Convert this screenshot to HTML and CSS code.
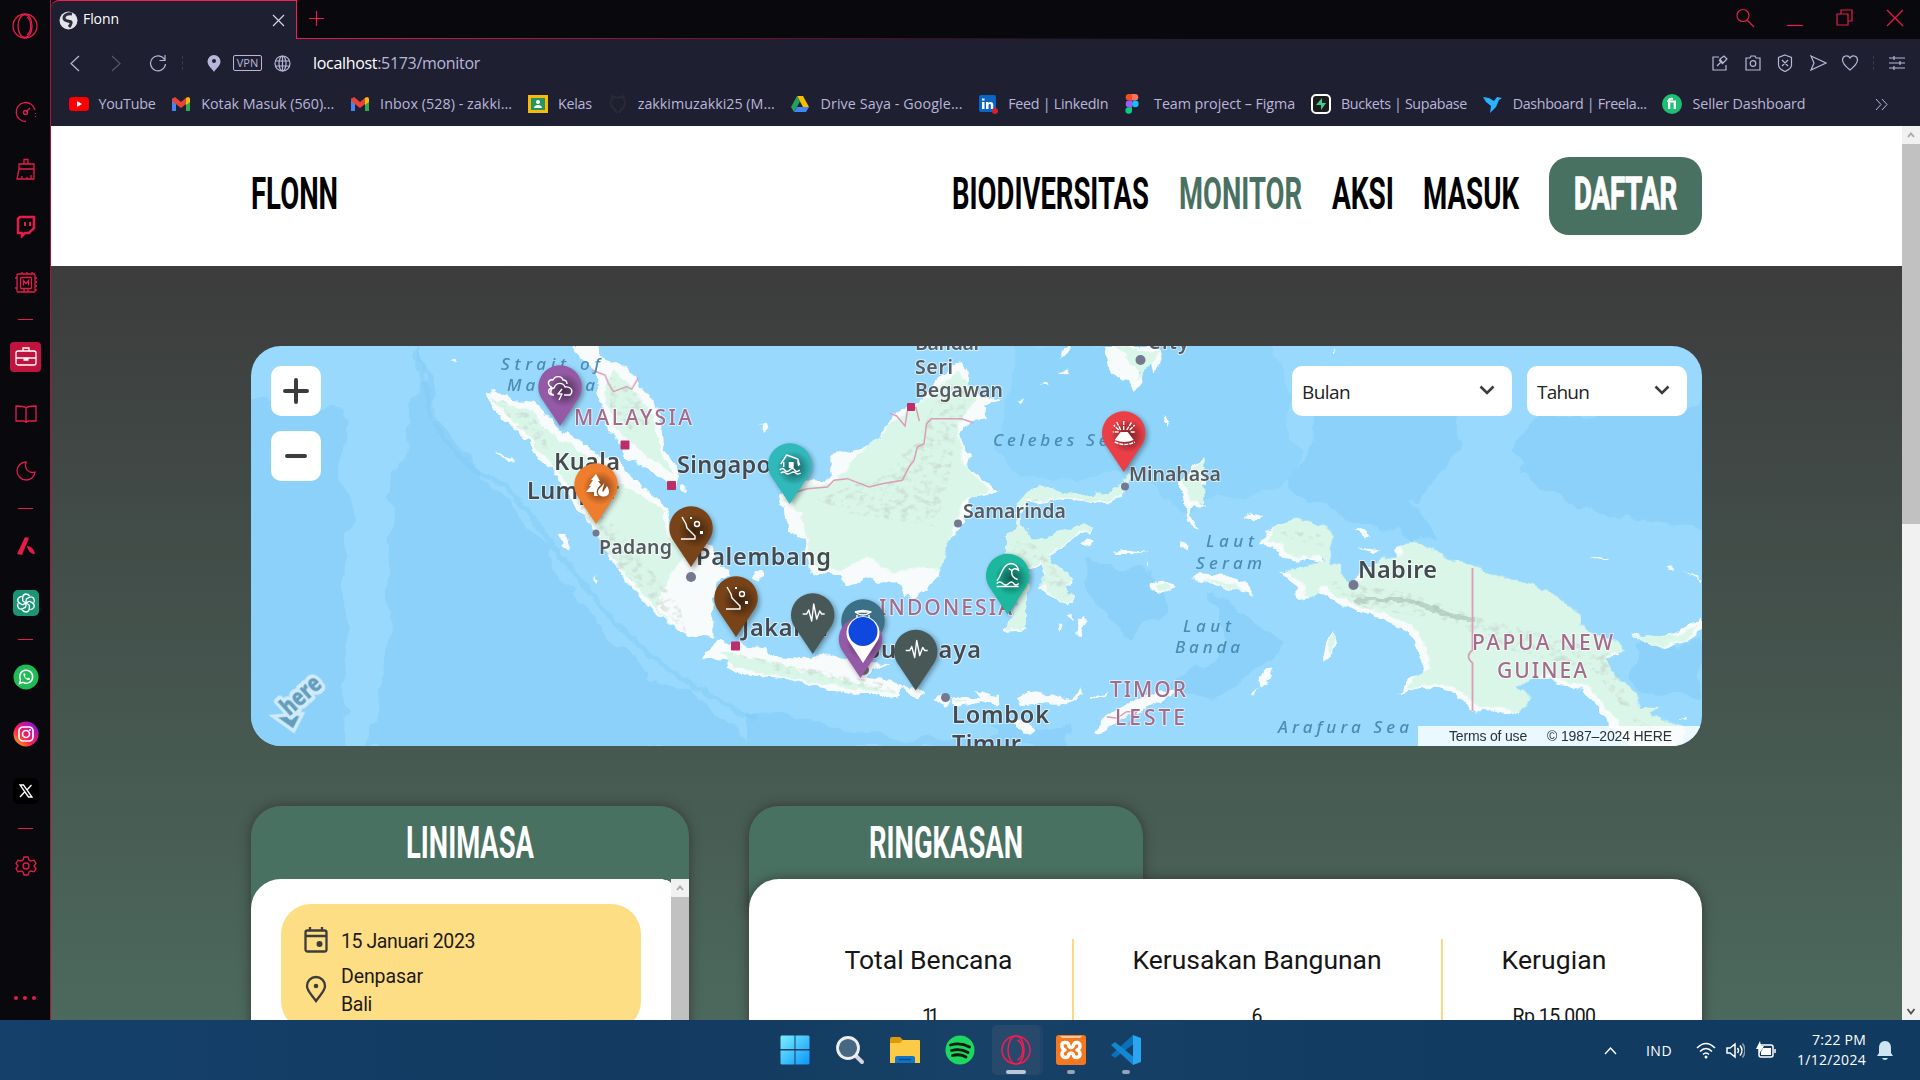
FILE: index.html
```html
<!DOCTYPE html>
<html lang="id">
<head>
<meta charset="utf-8">
<title>Flonn</title>
<link rel="stylesheet" href="styles.css">
</head>
<body>
<div class="browser">
  <aside class="sidebar">
    <div class="side-logo"><svg width="28" height="28" viewBox="0 0 28 28"><circle cx="14" cy="14" r="12"/><ellipse cx="14" cy="14" rx="7" ry="11.5"/><path d="M16 5c5 4 5 14 0 18"/></svg></div>
    <div class="side-item first"><svg viewBox="0 0 24 24"><path d="M12 21.500A9.500 9.500 0 1 1 21 10M12 12l4-4M21.500 13v1M21.500 16v1"/><circle cx="11.500" cy="12.500" r="2"/></svg></div>
    <div class="side-item"><svg viewBox="0 0 24 24"><path d="M10 7V2.500h4V7M5 7h15v5H5zM5 12L3 22h17v-10M8 22v-3M13 22v-2M17 22v-4"/></svg></div>
    <div class="side-item"><svg viewBox="0 0 24 24"><path stroke-width="2.500" d="M4 4.500L6 3h14v11l-5 5h-4l-3 3v-3H4z"/><path stroke-width="2" d="M11 8v4M16 8v4"/></svg></div>
    <div class="side-item"><svg viewBox="0 0 24 24"><rect x="3" y="3" width="18" height="18" rx="1"/><rect x="6.500" y="6.500" width="11" height="11" rx="1"/><path d="M9.500 14.500v-5l2.500 3 2.500-3v5M8 3V1M13 3V1M18 3V1M21 7h2M21 11h2M21 15h2M21 19h2M3 7H1M3 17H1M10 17v4M14 17v4"/></svg></div>
    <div class="side-rule"></div>
    <div class="side-item"><div class="side-active"><svg viewBox="0 0 24 24"><rect x="2" y="6" width="20" height="14" rx="2"/><path d="M9 6V3h6v3M2 13h20"/><path d="M9.500 14.500h5" stroke-width="2.500"/></svg></div></div>
    <div class="side-item"><svg viewBox="0 0 24 24"><path d="M12 6C11 4.500 9 4 2 4v15h7c2 0 3 1 3 2 0-1 1-2 3-2h7V4c-7 0-9 .5-10 2zM12 6v15"/></svg></div>
    <div class="side-item"><svg viewBox="0 0 24 24"><path d="M12 3a9 9 0 1 0 9 10c-6 2-11-3-9-10z"/></svg></div>
    <div class="side-rule"></div>
    <div class="side-item"><svg viewBox="0 0 24 24"><path class="solid" d="M3 20L11 3l4 1-7 17zM13 12c4 0 7 3 8 8-4 0-7-3-8-8z"/></svg></div>
    <div class="side-item"><svg class="app" viewBox="0 0 26 26"><rect width="26" height="26" rx="5" fill="#1b9573"/><g fill="none" stroke="#fff" stroke-width="1.300" stroke-linejoin="round"><path id="knot" d="M9.700 11V7.500q0-3 3-3.500 2.500 0 4 2M9.700 11l3.500 2"/><use href="#knot" transform="rotate(60 13 13)"/><use href="#knot" transform="rotate(120 13 13)"/><use href="#knot" transform="rotate(180 13 13)"/><use href="#knot" transform="rotate(240 13 13)"/><use href="#knot" transform="rotate(300 13 13)"/></g></svg></div>
    <div class="side-rule"></div>
    <div class="side-item"><svg class="app" viewBox="0 0 26 26"><circle cx="13" cy="13" r="12.500" fill="#1fbb54"/><path d="M6.500 19.500l1-3.600a6.500 6.500 0 1 1 2.500 2.500z" fill="none" stroke="#fff" stroke-width="1.500"/><path d="M10.500 9.500c-.5 3.500 3 7 6 6.500l.5-1.500-2-1-1 1c-1-.5-2-1.500-2.300-2.500l1-1-.8-1.700z" fill="#fff"/></svg></div>
    <div class="side-item"><svg class="app" viewBox="0 0 26 26"><defs><linearGradient id="insta" x1="0" y1="1" x2="1" y2="0"><stop offset="0" stop-color="#ffc400"/><stop offset=".4" stop-color="#fd1d50"/><stop offset="1" stop-color="#7a10f5"/></linearGradient></defs><circle cx="13" cy="13" r="12.500" fill="url(#insta)"/><rect x="6" y="6" width="14" height="14" rx="4" fill="none" stroke="#fff" stroke-width="1.700"/><circle cx="13" cy="13" r="3.500" fill="none" stroke="#fff" stroke-width="1.700"/><circle cx="17" cy="9" r="1" fill="#fff"/></svg></div>
    <div class="side-item"><svg class="app" viewBox="0 0 26 26"><rect width="26" height="26" rx="6" fill="#000"/><path d="M7 7h3.500l8.500 12h-3.500zM7 19l5-5.500M18.500 7l-5 5.500" fill="none" stroke="#fff" stroke-width="1.300"/></svg></div>
    <div class="side-rule"></div>
    <div class="side-item"><svg viewBox="0 0 24 24"><path d="M10 3h4l1 3 2 1 3-.8 2 3.300L20 12l2 2.500-2 3.300-3-.8-2 1-1 3h-4l-1-3-2-1-3 .8-2-3.300L4 12 2 9.500l2-3.300L7 7l2-1z"/><circle cx="12" cy="12" r="3"/></svg></div>
    <div class="side-more"><i></i><i></i><i></i></div>
  </aside>

  <main class="window">
    <header class="chrome">
      <div class="tabs">
        <div class="tab">
          <svg width="19" height="19" viewBox="0 0 19 19"><circle cx="9.500" cy="9.500" r="9" fill="#e4e4ea"/><path d="M13 3C9 2 5 4 5 7s4 3 6 3.500 1 3-1 5.500" fill="none" stroke="#2b2c3e" stroke-width="3"/></svg>
          <span class="fit" data-w="36">Flonn</span>
          <svg class="tab-close" width="13" height="13" viewBox="0 0 13 13"><path d="M1 1l11 11M12 1L1 12"/></svg>
        </div>
        <svg class="tab-new" width="15" height="15" viewBox="0 0 15 15"><path d="M7.500 0v15M0 7.500h15"/></svg>
        <div class="win-controls">
          <svg viewBox="0 0 20 20"><circle cx="8" cy="7.500" r="6"/><path d="M12 12l7 7"/></svg>
          <svg viewBox="0 0 20 20"><path d="M2 17.500h16"/></svg>
          <svg viewBox="0 0 20 20"><path d="M2 6h11v11H2zM6 6V2h11v11h-4"/></svg>
          <svg viewBox="0 0 20 20"><path d="M2 2l16 16M18 2L2 18"/></svg>
        </div>
      </div>
      <div class="toolbar">
        <svg class="tb-back" width="10" height="17" viewBox="0 0 10 17"><path d="M9 1L1 8.500 9 16"/></svg>
        <svg class="tb-fwd" width="10" height="17" viewBox="0 0 10 17"><path d="M1 1l8 7.500L1 16"/></svg>
        <svg class="tb-reload" width="18" height="18" viewBox="0 0 18 18"><path d="M15.500 5.500A7.500 7.500 0 1 0 16.500 10M16 1v5.500h-5.500"/></svg>
        <i class="tb-sep"></i>
        <svg class="tb-pin" width="14" height="17" viewBox="0 0 14 17"><path d="M7 0a6.500 6.500 0 0 1 6.500 6.500C13.500 11 8.500 14 7 17 5.500 14 .5 11 .5 6.500A6.500 6.500 0 0 1 7 0z"/><circle cx="7" cy="6" r="2"/></svg>
        <span class="vpn">VPN</span>
        <svg class="tb-globe" width="17" height="17" viewBox="0 0 17 17"><circle cx="8.500" cy="8.500" r="7.500"/><ellipse cx="8.500" cy="8.500" rx="3.500" ry="7.500"/><path d="M1 6h15M1 11h15M8.500 1v15"/></svg>
        <div class="url fit" data-w="167"><b>localhost</b>:5173/monitor</div>
        <div class="tb-right">
          <svg viewBox="0 0 18 18"><path d="M8 3H2v13h13v-5M6 12l4-4M8 6l4 4M9 5l4-3 3 3-4 4z"/></svg>
          <svg viewBox="0 0 18 18"><path d="M2 4h4l1-2h4l1 2h4v12H2z"/><circle cx="9" cy="9.500" r="2.800"/></svg>
          <svg viewBox="0 0 18 18"><path d="M9 1l6.500 2.500V11c0 3-3 5-6.500 6.500C5.500 16 2.500 14 2.500 11V3.500zM6 6l6 6M12 6l-6 6"/></svg>
          <svg viewBox="0 0 18 18"><path d="M2 2l15 7-15 7 3-7z"/></svg>
          <svg viewBox="0 0 18 18"><path d="M9 16C4 12 1.500 9.500 1.500 6 1.500 1.500 7 .5 9 4c2-3.500 7.500-2.500 7.500 2 0 3.500-2.500 6-7.500 10z"/></svg>
          <i class="tb-sep"></i>
          <svg viewBox="0 0 18 18"><path d="M1 4h16M1 9h16M1 14h16M6 2v4M12 7v4M6 12v4"/></svg>
        </div>
      </div>
      <div class="bookmarks">
        <div class="bm"><svg viewBox="0 0 20 20"><rect y="3" width="20" height="14" rx="3.500" fill="#f00"/><path d="M8 7l5 3-5 3z" fill="#fff"/></svg><span class="fit" data-w="57">YouTube</span></div>
        <div class="bm"><svg viewBox="0 0 20 20"><path d="M1 4v13h4V9z" fill="#4285f4"/><path d="M19 4v13h-4V9z" fill="#34a853"/><path d="M1 5l3-2 6 5 6-5 3 2v2l-9 7-9-7z" fill="#ea4335"/><path d="M15 4l3-1 1 2v3l-4 3z" fill="#fbbc04"/></svg><span class="fit" data-w="133">Kotak Masuk (560)...</span></div>
        <div class="bm"><svg viewBox="0 0 20 20"><path d="M1 4v13h4V9z" fill="#4285f4"/><path d="M19 4v13h-4V9z" fill="#34a853"/><path d="M1 5l3-2 6 5 6-5 3 2v2l-9 7-9-7z" fill="#ea4335"/><path d="M15 4l3-1 1 2v3l-4 3z" fill="#fbbc04"/></svg><span class="fit" data-w="132">Inbox (528) - zakki...</span></div>
        <div class="bm"><svg viewBox="0 0 20 20"><path d="M0 1h20v18H0z" fill="#f9b90c"/><path d="M3 4h14v12H3z" fill="#24985a"/><circle cx="10" cy="8" r="2" fill="#fff"/><path d="M6 14c0-4 8-4 8 0z" fill="#fff"/></svg><span class="fit" data-w="34">Kelas</span></div>
        <div class="bm"><svg viewBox="0 0 20 20"><path d="M8 19c1-2-1-3-3-5-3-3-3-7-1-9l.5-3L8 3.500h4L15.500 2l.5 3c2 3 1 7-1 9s-4 3-3 5" fill="none" stroke="#282a36" stroke-width="2.200"/></svg><span class="fit" data-w="137">zakkimuzakki25 (M...</span></div>
        <div class="bm"><svg viewBox="0 0 20 20"><path d="M7 2h6l6 11h-6z" fill="#fbbc04"/><path d="M7 2l3 5.500L4 18l-3-5z" fill="#20a25b"/><path d="M4 18l3-5h12l-3 5z" fill="#4285f4"/></svg><span class="fit" data-w="142">Drive Saya - Google...</span></div>
        <div class="bm"><svg viewBox="0 0 20 20"><rect x="1" y="1" width="17" height="17" rx="2" fill="#0a66c2"/><path d="M4 8h2.500v7H4zM4 4.500h2.500v2H4zM8 8h2.300v1c2-2 5-1 5 2v4h-2.500v-4c0-1.500-2.300-1.500-2.300 0v4H8z" fill="#fff"/><circle cx="17" cy="17" r="3" fill="#d3222a"/></svg><span class="fit" data-w="100">Feed | LinkedIn</span></div>
        <div class="bm"><svg viewBox="0 0 20 20"><path d="M8 0H5a3.300 3.300 0 0 0 0 6.600h3z" fill="#f24e1e"/><path d="M8 0h3a3.300 3.300 0 0 1 0 6.600H8z" fill="#ff7262"/><path d="M8 6.600H5a3.300 3.300 0 0 0 0 6.600h3z" fill="#a259ff"/><circle cx="11.300" cy="9.900" r="3.300" fill="#1abcfe"/><path d="M8 13.200H5a3.300 3.300 0 1 0 3 3.300z" fill="#0acf83"/></svg><span class="fit" data-w="141">Team project – Figma</span></div>
        <div class="bm"><svg viewBox="0 0 20 20"><rect x="1" y="1" width="18" height="18" rx="4" fill="#1c1c1c" stroke="#fff" stroke-width="2"/><path d="M11 4l-6 7h5v5l5-7h-4z" fill="#3ecf8e"/></svg><span class="fit" data-w="126">Buckets | Supabase</span></div>
        <div class="bm"><svg viewBox="0 0 20 20"><path d="M0 3l6 1 5 3 3-4 5 1-3 2-3 7-6 6 1-7-5-4z" fill="#29b2fe"/></svg><span class="fit" data-w="134">Dashboard | Freela...</span></div>
        <div class="bm"><svg viewBox="0 0 20 20"><circle cx="10" cy="10" r="10" fill="#1dbf73"/><path d="M6 15V8H5V6.500h1C6 4 8 3.500 11 4v2C9 5.500 8.300 6 8.300 6.500H14V15h-2.400V8.500H8.300V15z" fill="#fff"/></svg><span class="fit" data-w="113">Seller Dashboard</span></div>
        <svg class="bm-more" width="13" height="11" viewBox="0 0 13 11"><path d="M1 0l5 5.500L1 11M7 0l5 5.500L7 11"/></svg>
      </div>
    </header>

    <div class="viewport">
      <div class="page">
        <nav class="nav">
          <svg class="display logo" width="87" height="64"><text x="0" y="45" textLength="87" lengthAdjust="spacingAndGlyphs">FLONN</text></svg>
          <svg class="display" width="196" height="64"><text x="-1" y="45" textLength="197" lengthAdjust="spacingAndGlyphs">BIODIVERSITAS</text></svg>
          <svg class="display current" width="121" height="64"><text x="-1" y="45" textLength="123" lengthAdjust="spacingAndGlyphs">MONITOR</text></svg>
          <svg class="display" width="61" height="64"><text x="0" y="45" textLength="62" lengthAdjust="spacingAndGlyphs">AKSI</text></svg>
          <svg class="display" width="94" height="64"><text x="-1" y="45" textLength="96" lengthAdjust="spacingAndGlyphs">MASUK</text></svg>
          <div class="cta"><svg class="display" width="101" height="64"><text x="-1" y="45" textLength="103" lengthAdjust="spacingAndGlyphs">DAFTAR</text></svg></div>
        </nav>

        <section class="map">
          <svg class="map-canvas" width="1451" height="400" viewBox="251 346 1451 400">
            <defs>
              <filter id="coast" x="-5%" y="-5%" width="110%" height="110%"><feTurbulence type="fractalNoise" baseFrequency=".09" numOctaves="3" seed="4" result="n"/><feDisplacementMap in="SourceGraphic" in2="n" scale="9" xChannelSelector="R" yChannelSelector="G"/></filter>
              <filter id="depth" x="-5%" y="-5%" width="110%" height="110%"><feTurbulence type="fractalNoise" baseFrequency=".03" numOctaves="3" seed="8" result="n"/><feDisplacementMap in="SourceGraphic" in2="n" scale="28" xChannelSelector="R" yChannelSelector="G"/></filter>
              <filter id="relief" x="0" y="0" width="100%" height="100%"><feTurbulence type="fractalNoise" baseFrequency=".12 .16" numOctaves="3" seed="11"/><feColorMatrix values="0 0 0 0 .5  0 0 0 0 .6  0 0 0 0 .55  3.500 0 0 0 -1.700"/><feComposite in2="SourceAlpha" operator="in"/></filter>
              <filter id="soft"><feGaussianBlur stdDeviation="2.500"/></filter>
              <radialGradient id="pinshade" cx=".5" cy=".5" r=".5"><stop offset="0" stop-opacity=".5"/><stop offset=".5" stop-opacity=".28"/><stop offset="1" stop-opacity="0"/></radialGradient>
              <path id="pin" d="M0 0L-19-28.500A21.700 21.700 0 1 1 19-28.500z"/>
              <path id="sumatra" d="M705 155L735 150 790 180 850 185 875 210 900 240 925 262 1000 310 1040 345 1110 360 1130 400 1150 420 1175 440 1210 465 1235 485 1260 505 1255 530 1270 590 1330 610 1390 620 1410 680 1445 690 1440 710 1400 720 1390 790 1390 895 1350 890 1315 895 1280 865 1215 820 1160 760 1110 700 1070 650 1040 580 1000 530 960 490 935 430 905 385 870 365 850 320 790 265 730 210z"/>
              <path id="malaya" d="M965 18L985 45 1030 85 1042 130 1050 200 1075 270 1110 310 1125 350 1180 380 1240 420 1275 440 1290 410 1275 370 1240 330 1235 260 1215 190 1165 130 1130 80 1090 70 1050 50 1045 18z"/>
              <path id="borneo" d="M160 425L190 420 230 425 245 400 240 345 300 330 360 315 420 250 430 220 470 205 510 185 540 140 590 95 625 65 660 100 650 140 680 140 700 170 760 180 700 200 715 235 660 240 630 280 640 330 660 350 650 380 690 410 740 455 700 465 660 470 655 530 625 570 590 610 580 660 565 705 530 745 490 775 465 770 455 740 430 720 385 735 345 710 320 735 285 740 270 705 220 700 185 705 170 640 160 590 125 585 108 540 105 510 90 490 95 460z"/>
              <path id="sulawesi" d="M800 560L800 500 825 465 870 440 920 455 1000 470 1070 465 1115 440 1130 400 1140 410 1125 450 1090 490 1010 490 960 475 880 485 830 490 812 520 812 560 850 600 885 610 920 580 985 560 1030 565 1025 580 985 585 930 630 895 650 915 680 945 695 965 730 945 745 970 780 955 800 910 770 870 740 885 700 870 675 835 690 830 780 830 870 770 875 775 840 800 800 800 700 765 640 765 600z"/>
              <path id="papua" d="M150 610L170 575 235 543 285 555 340 575 350 605 335 640 345 680 370 690 375 715 405 745 430 735 450 700 500 665 560 655 545 630 590 615 640 640 700 665 760 680 850 720 950 745 1040 790 1095 835 1095 870 1160 900 1210 920 1228 945 1170 955 1170 975 1200 1020 1240 1050 1270 1110 1325 1110 1300 1130 1340 1150 1400 1175 1400 1220 1260 1220 1180 1130 1120 1050 1060 1035 980 1010 950 1020 900 1050 945 1080 930 1110 890 1125 850 1110 790 1115 740 1065 690 1045 640 1040 570 1060 600 1010 640 1000 640 970 620 920 590 870 500 830 420 805 350 770 315 745 295 775 265 780 260 740 205 700 260 690 330 670 310 655 250 665 210 650 200 625z"/>
              <path id="java" d="M-145 955L-100 905-40 910 0 920 40 925 70 950 180 960 220 935 270 955 330 965 425 970 360 990 350 1010 430 1020 455 1045 445 1080 400 1065 330 1065 250 1050 150 1030 100 1015 0 1005-70 990-60 965z"/>
            </defs>
            <rect x="251" y="346" width="1451" height="400" fill="#98d9fd"/>
            <g class="sea" filter="url(#depth)">
              <path d="M240 395L350 410 340 480 350 520 345 600 350 650 345 750H240zM415 340L420 380 400 460 385 520 390 640 365 750H760L700 700 620 650 560 580 520 510 470 460 440 420z"/>
              <path d="M1020 345L1270 340 1290 420 1300 480 1180 510 1130 470 1080 478 1010 475 1000 440z" opacity=".75"/>
              <path d="M1320 410L1460 400 1450 470 1410 500 1440 540 1350 520 1290 490zM1530 420L1710 400V530L1600 515 1540 490 1510 450z"/>
              <path d="M1090 560L1150 570 1170 610 1130 640 1080 590zM1210 590L1280 640 1240 690 1160 700 1220 650z"/>
              <path d="M750 710L900 740 1000 735 990 720 1070 728 1060 750H750zM1630 650L1700 640V700L1640 690z"/>
            </g>
            <path d="M415 350c20 60 10 80 60 120 50 20 60 60 90 90 60 80 90 110 190 160" fill="none" stroke="#82cbf6" stroke-width="5" opacity=".5" filter="url(#coast)"/>
            <g class="land" filter="url(#coast)">
              <g transform="translate(250 340) scale(.33333)"><use href="#sumatra"/><use href="#malaya"/><path d="M740 335l40 15 10 15-30-10zM930 580l20 5 15 40-10 10-20-20zM1030 700l15 20-8 5zM600 55l20 0 0 15zM1150 420l20 0 10 30-15 5zM1290 440l25 10-5 10-20-10z"/></g>
              <g transform="translate(750 340) scale(.33333)">
                <use href="#borneo"/><use href="#sulawesi"/><use href="#java"/>
                <path d="M450 1045l50 0 25 15-25 15zM550 1080l30-20 20 25-20 15zM600 1075l40-10 50 10-10-25 20 5 20 20 25-10v25l-45-2-50 12-40-5zM800 1075l40-20 60 10 60 15 35-35v25l-55 22-60-2-60 5zM780 1135l50 10 30 25-20 15-40-25zM1035 1185l25-55 60-35 60-25 60-15 50-5-60 35-50 25-70 30-50 40zM1020 1068l50-15-10 12-40 10z"/>
                <path d="M1065 18l10 77 55 30 20 30 25-35-10-30 35-30 10 40 25-50-5-32zM930 60l10-42 25 0-20 30zM925 95l20-10 10 10-20 5zM870 130l20-5 5 8zM800 185l25-10-20 18zM1240 230l15 10-8 18z"/>
                <path d="M1290 430l40-50 35-30-15 40 20 40-40 20v30l45 20-45-5-10 25 30 50-35-25-10-55zM1320 715l30-15 80 5 60 30 20 30-50-15-80-15zM1200 725l40-10 35 25-40 20-30-15zM1090 635l20-8 40 8 55 3-50 5 0 0-60-2zM1190 650l8 25-5 0zM990 610l20-15 25 10-20 12zM985 840l15-15 10 20-20 40-10-5zM925 850l15 5-5 20-10-5zM950 820l15-5v25zM30 255l20-5 5 20-15 8zM10 690l30 0 5 15-25 20-15-15zM1290 610l30 8-10 10-20-5z"/>
              </g>
              <g transform="translate(1210 340) scale(.33333)"><use href="#papua"/><path d="M1260 880l40 5 50 5 50-10 40-30 36-10v30l-46 30-70 25-50-20zM340 940l5-40 25-30 13 40-33 55zM145 1030l20-40 20-5-15 40-20 15zM125 1060l20-15-12 20zM95 530l30-12 35 10-30 15zM430 562l25 0 30 30-20-2zM440 625l75 10-30 5zM1145 655l50-2-20 8zM1370 680l15-5 12 10-15 5zM1420 690l56 30-10 0zM1400 1135l20-5 5 10zM370 20l5 20-8-2z"/></g>
            </g>
            <g class="green" filter="url(#coast)">
              <g transform="translate(250 340) scale(.33333)"><path d="M715 165L780 200 850 210 880 270 960 310 1020 360 1090 420 1180 470 1240 500 1250 590 1320 620 1270 690 1220 800 1290 880 1170 760 1080 640 1010 520 930 400 800 250zM1090 90L1150 150 1210 230 1230 330 1270 400 1180 340 1100 270 1060 170z"/></g>
              <g transform="translate(750 340) scale(.33333)"><path d="M160 440L250 435 330 340 440 240 620 100 690 160 620 260 640 370 720 450 640 480 610 570 570 690 490 680 430 700 350 650 280 690 190 680 150 520 100 480z"/><use href="#sulawesi" transform="translate(0 -6)"/><path d="M-90 930L60 965 200 1000 440 1060 320 1050 100 1010-50 980zM1090 18L1130 50 1170 100 1150 130 1230 40zM1300 420l60-60 0 130-40-10zM1330 720l110 5 50 30-130-30zM600 1080l60 0-40 10zM1210 730l40-5 10 20-30 8z"/></g>
              <g transform="translate(1210 340) scale(.33333)"><use href="#papua" transform="translate(20 -10)"/><path d="M1270 885L1400 890 1476 850 1420 900 1350 920zM350 900l20-20 8 20-20 50z"/></g>
            </g>
            <g filter="url(#relief)" opacity=".5">
              <g transform="translate(250 340) scale(.33333)"><path d="M715 165L780 190 850 230 880 280 900 340 820 280zM1080 110L1180 170 1200 260 1150 280 1080 200zM960 450L1100 560 1290 800 1310 880 1080 660z"/></g>
              <g transform="translate(750 340) scale(.33333)"><path d="M590 120L680 160 620 260 600 400 560 560 300 520 200 480 400 400 500 300zM820 470L1090 480 850 485zM780 590L850 610 960 740 960 790 880 720 860 650 790 680zM-50 940L400 1030 440 1060 100 1000z"/></g>
              <g transform="translate(1210 340) scale(.33333)"><path d="M200 570L330 580 340 620 250 600zM350 720L600 760 800 830 1000 880 1200 940 1270 1130 1400 1200 1300 1180 1150 990 900 930 700 840 430 800z"/></g>
            </g>
            <path d="M1355 602q40-8 70 4t50 14" fill="none" stroke="#9fb8ad" stroke-width="5" opacity=".55" filter="url(#coast)"/>
            <g class="border">
              <g transform="translate(250 340) scale(.33333)"><path d="M1025 90l40 15 10 25 15 25 40-15 15 8 20-35"/></g>
              <g transform="translate(750 340) scale(.33333)"><path d="M420 220l20 8 25 30 8-50 25-5 10 40M670 248l-35-12-90 0-15 15-8 60-20 10-10 40-15 20-20 40-60 10-40 10-65-25-40 5-20 20-60 5-50 15-40-25M1070 1130l30 5 30-20 30 0-25 40"/></g>
              <path d="M1472.500 568v82q-8 6 0 13v48"/>
            </g>
            <g class="capital"><rect x="620.500" y="440.500" width="9" height="9" rx="1"/><rect x="667" y="481" width="9" height="9" rx="1"/><rect x="731" y="641.500" width="9" height="9" rx="1"/><rect x="907" y="403" width="8" height="8" rx="1"/></g>
            <g class="town"><circle cx="596" cy="533" r="3.500"/><circle cx="691" cy="577" r="5"/><circle cx="958" cy="523.500" r="4"/><circle cx="1125" cy="486.500" r="4"/><circle cx="1140.500" cy="360" r="5"/><circle cx="1353.500" cy="585" r="5"/><circle cx="945.500" cy="697.500" r="4.500"/><circle cx="864" cy="670" r="5"/></g>
            <g class="label sea-label">
              <text x="501" y="370" textLength="99">Strait of</text><text x="507" y="391" textLength="88">Malacca</text>
              <text x="993" y="446" textLength="128">Celebes Sea</text>
              <text x="1206" y="547" textLength="48">Laut</text><text x="1196" y="569" textLength="66">Seram</text>
              <text x="1183" y="632" textLength="48">Laut</text><text x="1175" y="653" textLength="65">Banda</text>
              <text x="1278" y="733" textLength="131">Arafura Sea</text>
            </g>
            <g class="label country">
              <text x="574" y="425" textLength="118">MALAYSIA</text><text x="879" y="615" textLength="133">INDONESIA</text>
              <text x="1110" y="697" textLength="76">TIMOR</text><text x="1115" y="725" textLength="70">LESTE</text>
              <text x="1472" y="650" textLength="141">PAPUA NEW</text><text x="1497" y="678" textLength="90">GUINEA</text>
            </g>
            <g class="label city">
              <text x="554" y="470" textLength="66">Kuala</text><text x="527" y="499" textLength="92">Lumpur</text>
              <text x="677" y="473" textLength="118">Singapore</text><text x="696" y="565" textLength="135">Palembang</text>
              <text x="742" y="636" textLength="86">Jakarta</text><text x="867" y="658" textLength="114">Surabaya</text>
              <text x="952" y="723" textLength="97">Lombok</text><text x="952" y="752" textLength="69">Timur</text>
              <text x="1358" y="578" textLength="79">Nabire</text>
            </g>
            <g class="label town-label">
              <text x="599" y="554" textLength="73">Padang</text><text x="963" y="518" textLength="103">Samarinda</text>
              <text x="1129" y="481" textLength="92">Minahasa</text>
              <text x="915" y="350" textLength="67">Bandar</text><text x="915" y="374" textLength="38">Seri</text><text x="915" y="397" textLength="88">Begawan</text>
              <text x="1148" y="349" textLength="41">City</text>
            </g>

            <g class="pin-shadows" filter="url(#soft)">
              <use href="#pin" x="562" y="428"/><use href="#pin" x="598" y="526"/><use href="#pin" x="693" y="570"/><use href="#pin" x="738" y="640"/><use href="#pin" x="792" y="506"/><use href="#pin" x="1126" y="474"/><use href="#pin" x="1010" y="616"/><use href="#pin" x="815" y="656"/><use href="#pin" x="918" y="692"/><use href="#pin" x="865" y="662"/><use href="#pin" x="862" y="680"/>
            </g>
            <g class="pin" transform="translate(560 426)"><use href="#pin" fill="#955aa5"/><circle cx="4" cy="-36" r="17" fill="url(#pinshade)"/><path d="M-6-31h-1c-5 0-6-6-1-7-1-2-2-1-3-3-2-4 2-6 4-5 2-5 9-4 10 0 4 0 4 3 4 4M-7-31c-4-2-2-7 1-7 2-6 9-6 11-1 6-1 9 4 5 8H4M2-37l-4 5h4l-3 6"/></g>
            <g class="pin" transform="translate(596 524)"><use href="#pin" fill="#ef7d2e"/><circle cx="4" cy="-36" r="17" fill="url(#pinshade)"/><path class="fill" d="M0-50l-5 6h2l-4 6h2l-5 6h8v4h4c-3-5 0-9 3-11l-3-4h2zM8-43c1 5-6 6-6 11 0 6 11 6 11 0 0-3-1-4-2-6l-2 3-2 3c-2-2 2-6 1-11z"/></g>
            <g class="pin" transform="translate(691 567)"><use href="#pin" fill="#784318"/><circle cx="4" cy="-36" r="17" fill="url(#pinshade)"/><path d="M-9-50l4 7 1 4 5 5 3 3v3H-10"/><circle cx="6" cy="-43" r="2.500"/><path class="fill" d="M-1-50h2v2h-2zM9-36h3v3H9z"/></g>
            <g class="pin" transform="translate(736 637)"><use href="#pin" fill="#784318"/><circle cx="4" cy="-36" r="17" fill="url(#pinshade)"/><path d="M-9-50l4 7 1 4 5 5 3 3v3H-10"/><circle cx="6" cy="-43" r="2.500"/><path class="fill" d="M-1-50h2v2h-2zM9-36h3v3H9z"/></g>
            <g class="pin" transform="translate(789.700 504)"><use href="#pin" fill="#31b8bb"/><circle cx="4" cy="-36" r="17" fill="url(#pinshade)"/><path d="M-9-40l6-9 11 4 2 6M-6-42v5M8-43l1 5M-10-34q3-3 5 0t5 0 5 0 5 0M-9-31q3-2 5 0t5 0 5 0 5 0"/><path class="fill" d="M-1-42h5v6h-5z"/></g>
            <g class="pin" transform="translate(1123.700 472)"><use href="#pin" fill="#ea3f46"/><circle cx="4" cy="-36" r="17" fill="url(#pinshade)"/><path class="fill" d="M-3-40h7l6 8q-9 4-19 0z"/><path d="M0-42v-9M-3-42l-4-8M3-42l5-8M-5-42l-5-5M6-42l5-5M-5-40h-6M7-40h5M-9-30q10 5 20 0" stroke-dasharray="4 1"/></g>
            <g class="pin" transform="translate(1007.700 614.500)"><use href="#pin" fill="#1cb79d"/><circle cx="4" cy="-36" r="17" fill="url(#pinshade)"/><path d="M-11-34c4-2 5-16 14-17 5 0 7 3 8 7-3-3-7-2-7 2s3 6 6 7M1-46l3 2M-11-31q3-3 6 0t6 0 5 0 5 0M-11-28h22"/></g>
            <g class="pin" transform="translate(812.700 654)"><use href="#pin" fill="#475856"/><path d="M-10-40h4l2-4 3 11 2-17 3 15 3-8 2 3h3"/></g>
            <g class="pin" transform="translate(863 660)"><use href="#pin" fill="#3b7087"/><path d="M-8-48h16M-8-48q8 6 16 0-8-3-16 0M-6-45v4h12v-4"/></g>
            <g class="pin" transform="translate(860.500 678)"><use href="#pin" fill="#955aa5"/><circle cx="4" cy="-36" r="19" fill="url(#pinshade)"/></g>
            <path d="M863 663l-13-20a16.500 16.500 0 1 1 26 0z" fill="#fff"/><circle cx="863" cy="631.500" r="14.500" fill="#0f48df"/>
            <g class="pin" transform="translate(915.700 690.500)"><use href="#pin" fill="#475856"/><path d="M-10-40h4l2-4 3 11 2-17 3 15 3-8 2 3h3"/></g>
            <g transform="translate(291 714) rotate(-42)"><path d="M-12-6L5 7l-13 5z" fill="#659dbd" stroke="#cfeafb" stroke-width="7" paint-order="stroke"/><text class="here-logo" x="-3" y="1" textLength="46" lengthAdjust="spacingAndGlyphs">here</text></g>
          </svg>
          <div class="map-zoom">
            <button><svg width="26" height="26" viewBox="0 0 26 26"><path d="M13 2v22M2 13h22"/></svg></button>
            <button><svg width="26" height="26" viewBox="0 0 26 26"><path d="M4 13h18"/></svg></button>
          </div>
          <div class="map-filters">
            <div class="select month"><span class="fit" data-w="48">Bulan</span><svg width="16" height="10" viewBox="0 0 16 10"><path d="M1.500 1.500L8 8l6.500-6.500"/></svg></div>
            <div class="select year"><span class="fit" data-w="52">Tahun</span><svg width="16" height="10" viewBox="0 0 16 10"><path d="M1.500 1.500L8 8l6.500-6.500"/></svg></div>
          </div>
          <div class="map-credit"><span class="fit" data-w="78">Terms of use</span><span class="fit" data-w="125">© 1987–2024 HERE</span></div>
        </section>

        <div class="panels">
          <section class="timeline">
            <h2><svg class="display light" width="128" height="73"><text x="0" y="52" textLength="128" lengthAdjust="spacingAndGlyphs">LINIMASA</text></svg></h2>
            <div class="timeline-body">
              <div class="timeline-list">
                <article class="event">
                  <div class="event-row"><svg width="24" height="28" viewBox="0 0 24 28"><rect x="1.500" y="4.500" width="21" height="21" rx="2"/><path d="M1.500 10h21M6 1v4M18 1v4" /><circle class="dot" cx="15.500" cy="18" r="3"/></svg><span class="fit" data-w="134">15 Januari 2023</span></div>
                  <div class="event-row place"><svg width="24" height="28" viewBox="0 0 24 28"><path d="M12 26C8 20 3 16 3 11a9 9 0 0 1 18 0c0 5-5 9-9 15z"/><circle class="dot" cx="12" cy="11" r="2.300"/></svg><div><span class="fit" data-w="82">Denpasar</span><br><span class="fit" data-w="31">Bali</span></div></div>
                </article>
              </div>
              <div class="scroll inner"><svg width="8" height="6" viewBox="0 0 8 6"><path d="M1 5l3-3.500L7 5"/></svg><i></i></div>
            </div>
          </section>
          <section class="summary">
            <h2><svg class="display light" width="154" height="73"><text x="0" y="52" textLength="154" lengthAdjust="spacingAndGlyphs">RINGKASAN</text></svg></h2>
            <div class="summary-body">
              <div class="stat"><h3 class="fit" data-w="168">Total Bencana</h3><p class="fit" data-w="13">11</p></div>
              <div class="stat"><h3 class="fit" data-w="249">Kerusakan Bangunan</h3><p>6</p></div>
              <div class="stat"><h3 class="fit" data-w="105">Kerugian</h3><p class="fit" data-w="83">Rp 15.000</p></div>
            </div>
          </section>
        </div>
      </div>
      <div class="scroll"><svg width="8" height="6" viewBox="0 0 8 6"><path d="M1 5l3-3.500L7 5"/></svg><i></i><svg class="down" width="10" height="7" viewBox="0 0 10 7"><path d="M1.500 1L5 5.500 8.500 1"/></svg></div>
    </div>
  </main>
</div>

<footer class="taskbar">
  <div class="apps">
    <div class="app-slot"><svg width="30" height="30" viewBox="0 0 30 30"><defs><linearGradient id="win" x2="1" y2="1"><stop offset="0" stop-color="#7beffe"/><stop offset="1" stop-color="#0a95fb"/></linearGradient></defs><path fill="url(#win)" d="M1.500.5h13V14h-14V1.500zM15.500.5h13l1 1V14h-14zM.5 15.500h14v14h-13l-1-1zM15.500 15.500h14v13l-1 1h-13z"/></svg></div>
    <div class="app-slot"><svg width="30" height="30" viewBox="0 0 30 30"><path d="M20 20l7 7" stroke="#d4d7dc" stroke-width="4" stroke-linecap="round"/><circle cx="13" cy="13" r="10.500" fill="#476782" stroke="#eceef2" stroke-width="2.800"/></svg></div>
    <div class="app-slot"><svg width="30" height="30" viewBox="0 0 30 30"><path d="M0 4q0-2 2-2h8l3 3h5v8H0z" fill="#dc9a08"/><path d="M0 8h10l3-3h16q1 0 1 1v22H0z" fill="#fdca45"/><path d="M5 28v-5q0-2 2-2h16q2 0 2 2v5z" fill="#1274c4"/><path d="M9 24.500h12" stroke="#0a4c8a" stroke-width="1.500"/></svg></div>
    <div class="app-slot"><svg width="30" height="30" viewBox="0 0 30 30"><circle cx="15" cy="15" r="14.500" fill="#1ed760"/><path d="M5.500 10q10-3 19 2M6.500 15.500q9-2.500 16.500 2M7.500 20.500q7-2 13.500 1.500" fill="none" stroke="#071a0d" stroke-width="2.800" stroke-linecap="round"/></svg></div>
    <div class="app-slot active"><svg width="30" height="30" viewBox="0 0 30 30" fill="none" stroke="#f01e4e" stroke-width="1.500"><circle cx="15" cy="15" r="14"/><ellipse cx="15" cy="15" rx="8" ry="14"/><path d="M16.500 5c7 4 7 16 0 20"/></svg><i></i></div>
    <div class="app-slot running"><svg width="30" height="30" viewBox="0 0 30 30"><rect width="30" height="30" rx="3" fill="#f47820"/><path d="M4 1h22l-2 2H6z" fill="#fbc59a"/><path d="M13 11.500q0-4-4-4T6 11q0 3 3 4-3 1-3 4t3 3.500 4-3.500q2-2 4 0 1 4 4 3.500t3-3.500-3-4q3-1 3-4t-3-3.500-4 4q-2 2-4 0z" fill="none" stroke="#fff" stroke-width="3.400" stroke-linejoin="round"/></svg><i></i></div>
    <div class="app-slot running"><svg width="30" height="30" viewBox="0 0 30 30"><path d="M22 0L0 20l4 3L24 8z" fill="#0a70b8"/><path d="M22 30L0 10l4-3 20 16z" fill="#1387d0"/><path d="M22 0l8 3v24l-8 3z" fill="#29a5f2"/></svg><i></i></div>
  </div>
  <div class="tray">
    <svg class="tray-up" width="13" height="9" viewBox="0 0 13 9"><path d="M1 8l5.500-6L12 8"/></svg>
    <span class="lang fit" data-w="26">IND</span>
    <svg class="wifi" width="20" height="17" viewBox="0 0 20 17"><path d="M1 6q9-9 18 0M4 9.500q6-6 12 0M7 12.500q3-3 6 0"/><circle cx="10" cy="15" r="1.500"/></svg>
    <svg class="vol" width="19" height="17" viewBox="0 0 19 17"><path d="M1 6h3l5-4v13l-5-4H1zM11.500 6q2 2.500 0 5M14 3.500q4 5 0 10"/><path d="M16.500 1.500q5 7 0 14" opacity=".5"/></svg>
    <svg class="bat" width="22" height="18" viewBox="0 0 22 18"><rect x="4" y="4" width="14" height="12" rx="2"/><path d="M20 8v4"/><path class="solid" d="M8 7h8v7H6v-3zM5 0L1 8h3v5l5-8H6z"/></svg>
    <div class="clock"><span class="fit" data-w="54">7:22 PM</span><span class="fit" data-w="69">1/12/2024</span></div>
    <svg class="bell" width="18" height="21" viewBox="0 0 18 21"><path d="M9 1c4 0 6 3 6 7v5l2 3H1l2-3V8c0-4 2-7 6-7zM6 18h6q-1 2-3 2t-3-2z"/></svg>
  </div>
</footer>
<script src="fit.js"></script>
</body>
</html>
```
FILE: styles.css
```css
* { box-sizing: border-box; }
body { margin: 0; width: 1920px; height: 1080px; overflow: hidden; display: flex; flex-direction: column; background: #09080d; font-family: "Open Sans", "Noto Sans", sans-serif; }
svg { display: block; flex: none; }
h2, h3, p { margin: 0; font-weight: 400; }
.fit { white-space: nowrap; display: inline-block; }
.browser { display: flex; height: 1020px; flex: none; }

.sidebar { width: 51px; flex: none; display: flex; flex-direction: column; border-right: 1px solid #a01a3e; background: #09080d; }
.sidebar svg { width: 24px; height: 24px; fill: none; stroke: #e51c4a; stroke-width: 1.3; }
.sidebar .side-logo svg { width: 28px; height: 28px; }
.sidebar svg .solid { fill: #e51c4a; stroke: none; }
.sidebar svg.app { width: 26px; height: 26px; stroke: none; }
.side-logo { height: 52px; display: flex; align-items: center; justify-content: center; }
.side-item { height: 57px; display: flex; align-items: center; justify-content: center; padding-left: 1px; }
.side-item.first { margin-top: 31px; }
.side-rule { height: 17.500px; display: flex; align-items: center; justify-content: center; }
.side-rule::before { content: ""; width: 15px; height: 1px; background: #e51c4a; }
.side-active { width: 31px; height: 30px; border-radius: 4px; background: #c0143e; display: flex; align-items: center; justify-content: center; }
.sidebar .side-active svg { stroke: #fff; }
.side-more { margin-top: auto; height: 44px; display: flex; align-items: center; justify-content: center; gap: 5px; }
.side-more i { width: 4px; height: 4px; border-radius: 50%; background: #e51c4a; }

.window { flex: 1; display: flex; flex-direction: column; min-width: 0; }
.chrome { height: 126px; background: #1f1f32; color: #b9b6d8; flex: none; }
.tabs { height: 39px; display: flex; background: linear-gradient(90deg, #e51c4a 250px, #1f0d18 1000px, #09080d 1150px) 0 100% / 100% 1px no-repeat #09080d; }
.tab { width: 246px; background: #1f1f32; border: solid #f81e4e; border-width: 1px 1px 0 0; border-top-left-radius: 8px; display: flex; align-items: center; padding: 0 11px 0 8px; gap: 5px; color: #fff; font-size: 14px; }
.tab .fit { margin-top: -3px; }
.tab-close { margin-left: auto; stroke: #d5d3e6; stroke-width: 1.2; }
.tab-new { margin: 11px 0 0 12px; stroke: #e51c4a; stroke-width: 1.2; }
.win-controls { margin: 8px 15px 0 auto; display: flex; gap: 30px; }
.win-controls svg { width: 20px; height: 20px; fill: none; stroke: #e51c4a; stroke-width: 1.2; }
.toolbar { height: 48px; display: flex; align-items: center; padding: 0 14px 0 19px; }
.toolbar svg { fill: none; stroke: #b9b6d8; stroke-width: 1.2; }
.tb-fwd { margin-left: 31px; opacity: .35; }
.tb-reload { margin-left: 28px; }
.tb-sep { width: 1px; height: 14px; border-left: 1px dashed #3a3a52; margin-left: 15px; }
.toolbar .tb-pin { margin-left: 24px; fill: #b9b6d8; stroke: none; }
.toolbar .tb-pin circle { fill: #1f1f32; }
.vpn { margin-left: 12px; width: 29px; height: 16px; border: 1px solid #b9b6d8; border-radius: 2px; font-size: 11px; line-height: 14px; text-align: center; }
.tb-globe { margin-left: 12px; }
.url { margin-left: 22px; font-size: 16px; }
.url b { color: #fff; font-weight: 400; }
.tb-right { margin-left: auto; display: flex; gap: 14.500px; align-items: center; }
.tb-right svg { width: 18px; height: 18px; }
.tb-right .tb-sep { margin: 0 0 0 -1px; }
.bookmarks { height: 34px; display: flex; align-items: center; gap: 15.800px; padding-left: 17.500px; font-size: 14.300px; }
.bm { display: flex; align-items: center; gap: 10px; }
.bm .fit { margin-top: -1px; }
.bm svg { width: 20px; height: 20px; }
.bm-more { margin: 0 32px 0 auto; fill: none; stroke: #b9b6d8; }

.viewport { flex: 1; display: flex; min-height: 0; }
.page { flex: 1; overflow: hidden; background: linear-gradient(#3c3c3c 140px, #4c695d 894px); }
.scroll { width: 18px; background: #f1f1f1; display: flex; flex-direction: column; align-items: center; padding-top: 6px; }
.scroll svg { fill: none; stroke: #a8a8a8; stroke-width: 1.8; }
.scroll i { margin-top: 6px; width: 100%; height: 380px; background: #c1c1c1; }
.scroll .down { margin: auto 0 5px; stroke: #505050; }
.scroll.inner i { height: auto; flex: 1; }

.display { font-family: Roboto, "Liberation Sans", sans-serif; font-size: 45px; font-weight: 700; fill: #000; overflow: visible; }
.display.current { fill: #497162; }
.display.light, .cta .display { fill: #fff; }
.nav { height: 140px; background: #fff; padding: 0 200px; display: flex; align-items: center; gap: 31px; }
.nav .logo { margin-right: auto; }
.cta { width: 153px; height: 78px; border-radius: 20px; background: #497162; display: flex; align-items: center; justify-content: center; }
.cta .display { stroke: #fff; stroke-width: 1.3; }

.map { position: relative; width: 1451px; height: 400px; margin: 80px 200px 60px; border-radius: 30px; overflow: hidden; }
.sea { fill: #8bd1fa; }
.land { fill: #f8fbfc; }
.green { fill: #daf6e9; }
.border { fill: none; stroke: #dc9db8; }
.border g { stroke-width: 4.500; }
.border > path { stroke-width: 1.8; }
.capital { fill: #bd2d67; }
.town { fill: #747990; }
.label { font-family: "Noto Sans", "Open Sans", sans-serif; paint-order: stroke; stroke: rgba(255,255,255,.6); stroke-width: 2px; stroke-linejoin: round; }
.sea-label { font-size: 17px; font-style: italic; font-weight: 500; fill: #4c8bb4; stroke: none; }
.country { font-size: 21px; font-weight: 500; fill: #a46b8b; }
.city { font-size: 23.500px; font-weight: 600; fill: #444a4f; }
.town-label { font-size: 19.500px; font-weight: 600; fill: #555b60; }
.pin-shadows { fill: #000; opacity: .35; }
.pin path, .pin circle:not([fill]) { fill: none; stroke: #fff; stroke-width: 1.4; stroke-linejoin: round; }
.pin path.fill { fill: #fff; stroke: none; }
.here-logo { font: 800 24px "Open Sans", sans-serif; fill: #659dbd; stroke: #cfeafb; stroke-width: 8px; paint-order: stroke; stroke-linejoin: round; }
.map-zoom { position: absolute; left: 20px; top: 20px; display: flex; flex-direction: column; gap: 15px; }
.map-zoom button { width: 50px; height: 50px; padding: 0; border: 0; border-radius: 10px; background: #fff; display: flex; align-items: center; justify-content: center; }
.map-zoom svg { stroke: #3c3c3c; stroke-width: 4; stroke-linecap: round; }
.map-filters { position: absolute; right: 15px; top: 20px; display: flex; gap: 15px; }
.select { height: 50px; background: #fff; border-radius: 10px; display: flex; align-items: center; justify-content: space-between; padding: 1px 17px 0 10px; font-size: 19px; color: #222; }
.select svg { fill: none; stroke: #3c3c3c; stroke-width: 2.6; margin-top: -4px; }
.month { width: 220px; }
.year { width: 160px; }
.map-credit { position: absolute; right: 0; bottom: 0; width: 284px; height: 20px; background: rgba(255,255,255,.8); display: flex; justify-content: flex-end; gap: 20px; padding-right: 30px; font: 14px/21px "Liberation Sans", Arial, sans-serif; color: #2c3138; }

.panels { display: flex; gap: 60px; padding: 0 200px; height: 300px; }
.panels h2 { height: 73px; display: flex; justify-content: center; }
.timeline { width: 438px; background: #497162; border-radius: 30px 30px 0 0; box-shadow: 0 0 12px rgba(40,30,30,.6); }
.timeline-body { height: 227px; display: flex; background: #fff; border-radius: 30px 0 0 0; position: relative; }
.timeline-list { flex: 1; padding: 25px 30px 0; }
.timeline-body::after { content: ""; position: absolute; right: 18px; top: 0; width: 12px; height: 4px; background: radial-gradient(ellipse at 0 100%, transparent 11px, #497162 12px); }
.event { width: 360px; height: 127px; background: #fede85; border-radius: 30px; padding: 22px 23px; font: 19.500px/28px Roboto, sans-serif; color: #1d1b16; }
.event-row { display: flex; align-items: center; gap: 13px; height: 28px; }
.event-row.place { height: 56px; margin-top: 7px; }
.event-row .fit { position: relative; top: 1.500px; }
.event svg { fill: none; stroke: #3c3c3c; stroke-width: 2.300; }
.event svg .dot { fill: #3c3c3c; stroke: none; }
.event .fit { vertical-align: top; }
.summary { width: 953px; }
.summary h2 { width: 394px; height: 103px; background: #497162; border-radius: 30px 30px 0 0; box-shadow: 0 0 12px rgba(40,30,30,.6); }
.summary-body { position: relative; height: 227px; margin-top: -30px; padding-top: 60px; background: #fff; border-radius: 30px 30px 0 0; box-shadow: 0 0 12px rgba(40,30,30,.6); display: flex; justify-content: center; font-family: Roboto, sans-serif; color: #161616; }
.stat { padding: 1px 59px 0; display: flex; flex-direction: column; align-items: center; gap: 23px; }
.stat + .stat { border-left: 2px solid #fed982; }
.stat h3 { font-size: 26.500px; line-height: 39px; }
.stat p { font-size: 19.500px; line-height: 30px; }

.taskbar { height: 60px; flex: none; display: flex; align-items: center; background: linear-gradient(90deg, #14406a, #133a60 35%, #174166 50%, #123b62 75%, #113a61); color: #fff; }
.apps { display: flex; gap: 7.300px; margin-left: 770.500px; }
.app-slot { width: 48px; height: 50px; border-radius: 5px; position: relative; display: flex; align-items: center; justify-content: center; }
.app-slot.active { background: #27496c; box-shadow: 3px 0 0 #21456a; }
.app-slot i { position: absolute; bottom: 1px; width: 8px; height: 4px; border-radius: 2px; background: #93a3b8; }
.app-slot.active i { width: 20px; background: #b2cadb; }
.tray { margin-left: auto; display: flex; align-items: center; margin-right: 26px; font-size: 14px; }
.tray svg { fill: none; stroke: #fff; stroke-width: 1.5; }
.tray .solid, .wifi circle { fill: #fff; stroke: none; }
.lang { margin-left: 29px; }
.wifi { margin-left: 24px; }
.vol { margin-left: 10px; }
.bat { margin-left: 10px; }
.clock { margin-left: 19px; width: 70px; display: flex; flex-direction: column; align-items: flex-end; line-height: 20px; }
.tray .bell { margin-left: 10px; fill: #cfe6f2; stroke: none; }
```
FILE: fit.js
```js
// Tracks each label so that it fills the width named in data-w.
document.querySelectorAll('.fit').forEach(function (el) {
  var target = parseFloat(el.dataset.w);
  var natural = el.getBoundingClientRect().width;
  var n = el.textContent.length;
  el.style.letterSpacing = ((target - natural) / n) + 'px';
});
```
